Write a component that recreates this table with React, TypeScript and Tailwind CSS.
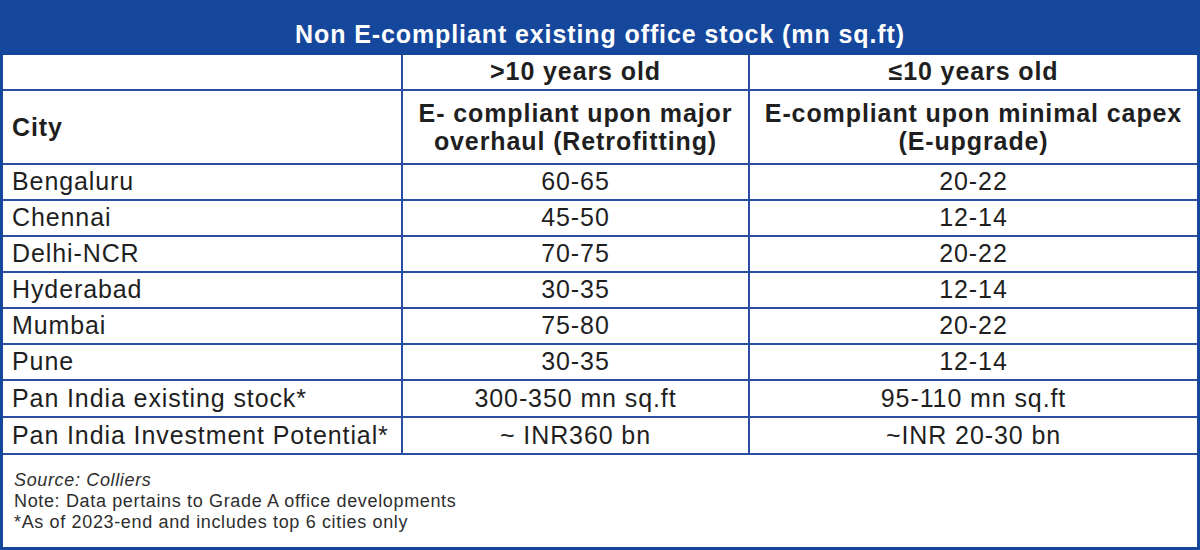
import React from "react";

const rows = [
  { city: "Bengaluru", old: "60-65", recent: "20-22", h: "h-[36px]" },
  { city: "Chennai", old: "45-50", recent: "12-14", h: "h-[36px]" },
  { city: "Delhi-NCR", old: "70-75", recent: "20-22", h: "h-[36px]" },
  { city: "Hyderabad", old: "30-35", recent: "12-14", h: "h-[36px]" },
  { city: "Mumbai", old: "75-80", recent: "20-22", h: "h-[36px]" },
  { city: "Pune", old: "30-35", recent: "12-14", h: "h-[36px]" },
  {
    city: "Pan India existing stock*",
    old: "300-350 mn sq.ft",
    recent: "95-110 mn sq.ft",
    h: "h-[37px]",
  },
  {
    city: "Pan India Investment Potential*",
    old: "~ INR360 bn",
    recent: "~INR 20-30 bn",
    h: "h-[37px]",
  },
];

const line = "border-[#2b4ea4]";

const App = () => {
  return (
    <div
      className="flex h-[550px] w-[1200px] flex-col bg-[#15479d] px-[3px] pb-[3px] text-[#1f1f1f]"
      style={{ fontFamily: '"Liberation Sans", Arial, sans-serif' }}
    >
      {/* title band */}
      <div className="flex h-[55px] items-center justify-center pt-[15px] text-[25px] font-bold tracking-[0.9px] text-white">
        Non E-compliant existing office stock (mn sq.ft)
      </div>

      <div className="flex flex-1 flex-col bg-white">
        {/* header row 1 */}
        <div className={`flex h-[36px] border-b-2 ${line}`}>
          <div className={`w-[400px] border-r-2 ${line}`} />
          <div
            className={`flex w-[347px] items-center justify-center border-r-2 ${line} text-[25px] font-bold tracking-[0.9px]`}
          >
            &gt;10 years old
          </div>
          <div className="flex flex-1 items-center justify-center text-[25px] font-bold tracking-[0.9px]">
            ≤10 years old
          </div>
        </div>

        {/* header row 2 */}
        <div className={`flex h-[74px] border-b-2 ${line} text-[25px] font-bold leading-[28px] tracking-[0.9px]`}>
          <div className={`flex w-[400px] items-center border-r-2 ${line} pl-[9px]`}>
            City
          </div>
          <div
            className={`flex w-[347px] items-center justify-center border-r-2 ${line} text-center`}
          >
            E- compliant upon major
            <br />
            overhaul (Retrofitting)
          </div>
          <div className="flex flex-1 items-center justify-center text-center">
            E-compliant upon minimal capex
            <br />
            (E-upgrade)
          </div>
        </div>

        {/* data rows */}
        {rows.map((r) => (
          <div
            key={r.city}
            className={`flex ${r.h} border-b-2 ${line} text-[25px] tracking-[0.9px]`}
          >
            <div className={`flex w-[400px] items-center border-r-2 ${line} pl-[9px]`}>
              {r.city}
            </div>
            <div
              className={`flex w-[347px] items-center justify-center border-r-2 ${line}`}
            >
              {r.old}
            </div>
            <div className="flex flex-1 items-center justify-center">{r.recent}</div>
          </div>
        ))}

        {/* notes */}
        <div className="pl-[11px] pt-[15px] text-[18px] leading-[21px] tracking-[0.65px] text-[#2e2e2e]">
          <div className="italic">Source: Colliers</div>
          <div>Note: Data pertains to Grade A office developments</div>
          <div>*As of 2023-end and includes top 6 cities only</div>
        </div>
      </div>
    </div>
  );
};

export default App;
